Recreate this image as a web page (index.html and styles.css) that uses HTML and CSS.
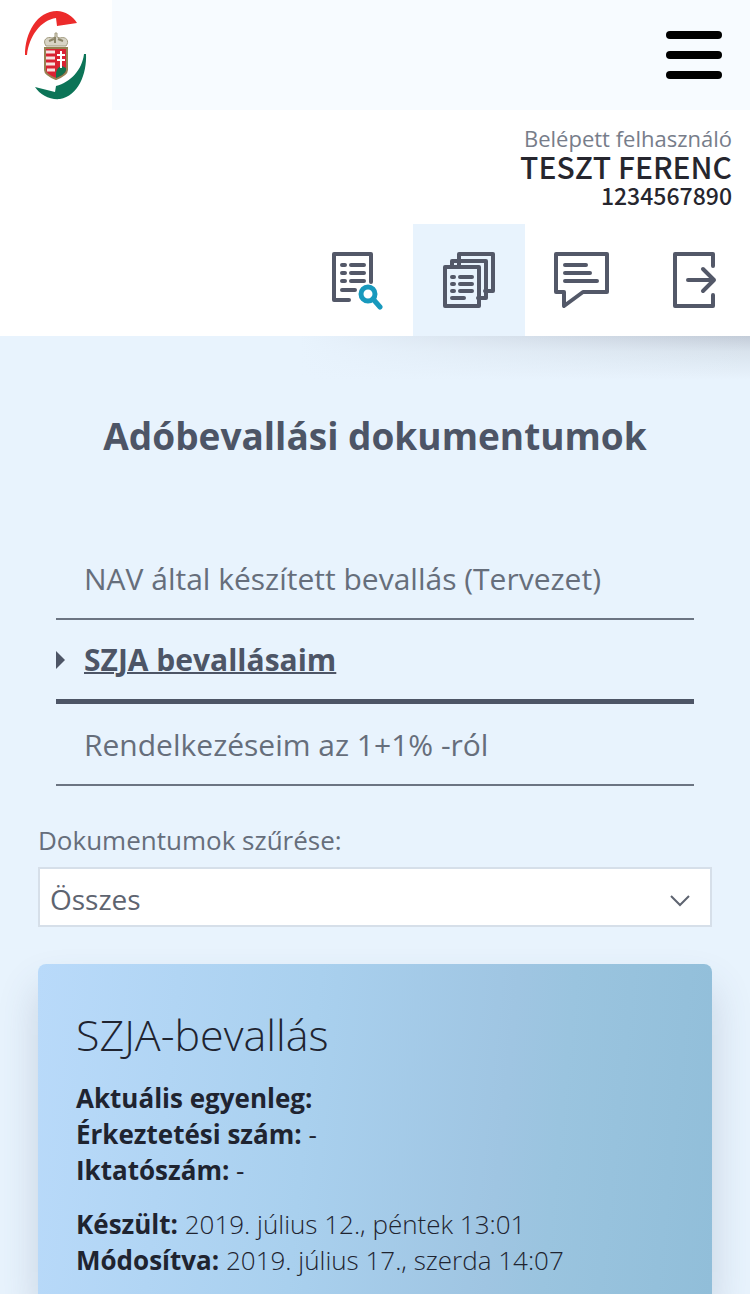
FILE: index.html
```html
<!doctype html>
<html lang="hu">
<head>
	<meta charset="UTF-8" />
	<meta name="viewport" content="width=device-width, initial-scale=1" />
	<title>Adóbevallási dokumentumok</title>
	<link rel="stylesheet" href="styles.css">
</head>
<body>
	<header class="header">
		<div class="topbar">
			<a href="#" class="logo" aria-label="Kezdőlap">
				<svg width="64" height="94" viewBox="0 0 64 94">
					<path d="M1 47C1 25 13 3 33 3c8 0 16 5 20 12l-20 3-1-8C17 12 5 28 3 47z" fill="#ec2b2b"/>
					<path d="M11 79l20 5 1-6C47 74 58 62 60 46h2c1 20-8 42-26 45-10 1-20-4-25-12z" fill="#0c7457"/>
					<path d="M22 38c-4-6 1-10 6-8l3-1v-4h2v4l3 1c6-2 10 3 6 8z" fill="#d8d4c6" stroke="#a39c80"/>
					<path d="M25 33l5-2M34 31l5 2M31 29v6" stroke="#8b8468" stroke-width="2"/>
					<path d="M21 40h22v22c0 4-6 7-11 9-5-2-11-5-11-9z" fill="#d92232" stroke="#968253" stroke-width="2"/>
					<path d="M22 44h9M22 50h9M22 56h9M23 62h8" stroke="#f6e3e1" stroke-width="3"/>
					<path d="M32 65c1-5 3-6 6-7l4 2v2c0 3-5 6-10 8z" fill="#11734e"/>
					<path d="M37 43v17M33 47h8M33 52h8" stroke="#fff" stroke-width="2"/>
				</svg>
			</a>
			<button type="button" class="menu-btn" aria-label="Menü">
				<span></span>
				<span></span>
				<span></span>
			</button>
		</div>
		<div class="user">
			<p class="user-label">Belépett felhasználó</p>
			<p class="user-name">TESZT FERENC</p>
			<p class="user-id">1234567890</p>
		</div>
		<nav class="tools" aria-label="Eszközök">
			<a href="#" aria-label="Keresés">
				<svg class="icon" viewBox="0 0 60 60">
					<path d="M45 32V4H8v46h15"/>
					<path class="lines" d="M16 15h3M25 15h13M16 23h3M25 23h13M16 31h3M25 31h13M16 40h13"/>
					<g class="blue"><circle cx="42" cy="44" r="7"/><path d="M47 49l7 8"/></g>
				</svg>
			</a>
			<a href="#" class="active" aria-label="Dokumentumok">
				<svg class="icon" viewBox="0 0 60 60">
					<path d="M20 16V4h34v37h-8"/>
					<path d="M13 16v-5h34v37h-8"/>
					<path d="M6 17h34v39H6z"/>
					<path class="lines" d="M13 27h2M21 27h12M13 34h2M21 34h12M13 41h2M21 41h12M13 48h12"/>
				</svg>
			</a>
			<a href="#" aria-label="Üzenetek">
				<svg class="icon" viewBox="0 0 60 60">
					<path d="M5 4h51v38H32L13 56V42H5z"/>
					<path class="lines" d="M14 15h21M14 23h25M14 31h32"/>
				</svg>
			</a>
			<a href="#" aria-label="Kilépés">
				<svg class="icon" viewBox="0 0 60 60">
					<path d="M49 16V4H11v52h38V45"/>
					<path d="M24 30h26M39 19l11 11-11 11"/>
				</svg>
			</a>
		</nav>
	</header>

	<main class="main">
		<h1>Adóbevallási dokumentumok</h1>
		<nav class="doc-nav" aria-label="Dokumentumok">
			<a href="#">NAV által készített bevallás (Tervezet)</a>
			<a href="#" class="active" aria-current="page">SZJA bevallásaim</a>
			<a href="#">Rendelkezéseim az 1+1% -ról</a>
		</nav>
		<div class="filter">
			<label for="szures">Dokumentumok szűrése:</label>
			<div class="select">
				<select id="szures">
					<option>Összes</option>
				</select>
				<svg width="20" height="12" viewBox="0 0 20 12"><path d="M1 1l9 9 9-9"/></svg>
			</div>
		</div>
		<article class="card">
			<h2>SZJA-bevallás</h2>
			<p><b>Aktuális egyenleg:</b></p>
			<p><b>Érkeztetési szám:</b> -</p>
			<p><b>Iktatószám:</b> -</p>
			<div class="dates">
				<p><b>Készült:</b> 2019. július 12., péntek 13:01</p>
				<p><b>Módosítva:</b> 2019. július 17., szerda 14:07</p>
			</div>
		</article>
	</main>
</body>
</html>
```
FILE: styles.css
```css
*{
	margin: 0;
	padding: 0;
	box-sizing: border-box;
}
body{
	display: flex;
	flex-direction: column;
	min-height: 100vh;
	background: #e8f3fd;
	color: #4d5566;
	font-family: "Open Sans", "Noto Sans", sans-serif;
}
a{
	color: inherit;
	text-decoration: none;
}

/* header */
.header{
	background: #fff;
}
.topbar{
	display: flex;
	justify-content: space-between;
	align-items: center;
	height: 110px;
	background: #f7fbff;
}
.logo{
	display: flex;
	align-items: center;
	justify-content: center;
	width: 112px;
	height: 110px;
	background: #fff;
}
.menu-btn{
	display: flex;
	flex-direction: column;
	gap: 12px;
	margin-right: 28px;
	border: 0;
	background: none;
	cursor: pointer;
}
.menu-btn span{
	width: 56px;
	height: 8px;
	border-radius: 4px;
	background: #000;
}
.user{
	padding: 14px 18px;
	text-align: right;
	color: #26262e;
}
.user-label{
	font-size: 22px;
	line-height: 28px;
	color: #777d8a;
}
.user-name{
	font: 500 30px/28px "Noto Sans CJK SC", sans-serif;
}
.user-id{
	font: 500 23px/30px "Noto Sans CJK SC", sans-serif;
}
.tools{
	display: flex;
	justify-content: flex-end;
}
.tools a{
	display: flex;
	align-items: center;
	justify-content: center;
	width: 15%;
	height: 112px;
}
.tools a.active{
	background: #e8f3fd;
}
.icon{
	width: 60px;
	height: 60px;
	fill: none;
	stroke: #535868;
	stroke-width: 4;
	stroke-linejoin: round;
	stroke-linecap: round;
}
.icon .lines{
	stroke-width: 4;
}
.icon .blue{
	stroke: #1899bd;
	stroke-width: 5;
}

/* content */
.main{
	flex: 1;
	display: flex;
	flex-direction: column;
	padding: 72px 38px 0;
	background:
		linear-gradient(to right, #e8f3fd 40%, rgba(232,243,253,0)) top / 100% 44px no-repeat,
		linear-gradient(#c3ccd8, #d9e3ed 35%, #e8f3fd) top / 100% 44px no-repeat;
}
h1{
	font-size: 37px;
	line-height: 56px;
	text-align: center;
}
.doc-nav{
	margin: 74px 18px 0;
}
.doc-nav a{
	display: flex;
	align-items: center;
	height: 82px;
	padding-left: 28px;
	border-bottom: 2px solid #6b7482;
	font-size: 30px;
	color: #666e7b;
}
.doc-nav a.active{
	height: 84px;
	padding-left: 0;
	border-bottom: 5px solid #4d5566;
	font-weight: bold;
	color: #4d5566;
	text-decoration: underline;
	text-decoration-thickness: 2px;
}
.doc-nav a.active::before{
	content: "";
	margin-right: 19px;
	border: 9px solid transparent;
	border-left-color: #4d5566;
	border-right: 0;
}
.filter{
	margin-top: 36px;
}
.filter label{
	display: block;
	font-size: 26px;
	line-height: 36px;
	color: #666e7b;
}
.select{
	position: relative;
	margin-top: 9px;
}
.select select{
	display: block;
	width: 100%;
	height: 60px;
	padding: 4px 10px 0;
	border: 2px solid #d6dfe9;
	border-radius: 0;
	appearance: none;
	background: #fff;
	font: 28px "Open Sans", sans-serif;
	color: #5e6470;
}
/* arrow over the select */
.select svg{
	position: absolute;
	right: 22px;
	top: 28px;
	fill: none;
	stroke: #5e6470;
	stroke-width: 2;
	pointer-events: none;
}
.card{
	flex: 1;
	margin-top: 37px;
	padding: 40px 38px 16px;
	border-radius: 8px 8px 0 0;
	background: linear-gradient(96deg, #b9dafa, #a9d0ee 40%, #9fc5e2 68%, #9ac4df 76%, #91bed9);
	box-shadow: 0 24px 40px rgba(60,80,110,.2);
	font-size: 26px;
	line-height: 36px;
	color: #1f2430;
}
.card h2{
	margin-bottom: 14px;
	font-size: 43px;
	font-weight: 300;
	line-height: 62px;
}
.card b{
	font-weight: 700;
}
.dates{
	margin-top: 18px;
	font-weight: 300;
}
```
